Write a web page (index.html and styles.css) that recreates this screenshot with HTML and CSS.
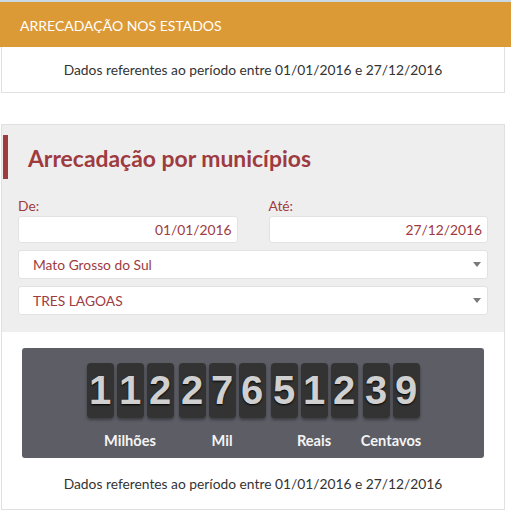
FILE: index.html
```html
<!DOCTYPE html>
<html lang="pt">
<head>
<meta charset="utf-8">
<link rel="stylesheet" href="styles.css">
</head>
<body>
<div class="topline"></div>
<div class="state-heading">ARRECADAÇÃO NOS ESTADOS</div>
<div class="state-box">Dados referentes ao período entre 01/01/2016 e 27/12/2016</div>

<div class="panel">
  <div class="filters">
    <h2 class="title">Arrecadação por municípios</h2>
    <div class="dates">
      <div class="field">
        <div class="label">De:</div>
        <div class="input date">01/01/2016</div>
      </div>
      <div class="field">
        <div class="label">Até:</div>
        <div class="input date">27/12/2016</div>
      </div>
    </div>
    <div class="input select"><span>Mato Grosso do Sul</span><i class="caret"></i></div>
    <div class="input select second"><span>TRES LAGOAS</span><i class="caret"></i></div>
  </div>
  <div class="result">
    <div class="counter">
      <div class="group">
        <div class="digits"><span class="card">1</span><span class="card">1</span><span class="card">2</span></div>
        <div class="unit"><span>Milhões</span></div>
      </div>
      <div class="group">
        <div class="digits"><span class="card">2</span><span class="card">7</span><span class="card">6</span></div>
        <div class="unit"><span>Mil</span></div>
      </div>
      <div class="group">
        <div class="digits"><span class="card">5</span><span class="card">1</span><span class="card">2</span></div>
        <div class="unit"><span>Reais</span></div>
      </div>
      <div class="group">
        <div class="digits"><span class="card">3</span><span class="card">9</span></div>
        <div class="unit"><span>Centavos</span></div>
      </div>
    </div>
    <div class="period">Dados referentes ao período entre 01/01/2016 e 27/12/2016</div>
  </div>
</div>
</body>
</html>
```

FILE: styles.css
```css
* { box-sizing: border-box; }
body {
  margin: 0;
  width: 511px;
  font-family: Lato, "Open Sans", sans-serif;
  font-size: 13.8px;
  color: #333;
  background: #fff;
}
.topline {
  height: 2px;
  background: #c9d9e6;
}
.state-heading {
  background: #dc9a37;
  color: #fff;
  line-height: 20px;
  padding: 14px 20px 11px;
  font-size: 14px;
}
.state-box {
  margin-left: 1px;
  width: 504px;
  border: 1px solid #e0e0e0;
  border-top: none;
  text-align: center;
  line-height: 20px;
  padding: 13px 0 12px;
}
.panel {
  margin-top: 31px;
  margin-left: 1px;
  width: 504px;
  border: 1px solid #e0e0e0;
}
.filters {
  background: #eeeeee;
  padding: 10px 16px 17px;
}
.title {
  margin: 0 0 0 -15px;
  border-left: 5px solid #9e3b40;
  padding: 2px 0 0 20px;
  height: 44px;
  line-height: 42px;
  font-size: 22.9px;
  font-weight: 700;
  color: #9e3b40;
}
.dates {
  display: flex;
  gap: 31px;
  margin-top: 17px;
}
.field { flex: 1; }
.label {
  color: #9e3b40;
  line-height: 20px;
  height: 20px;
}
.input {
  background: #fff;
  border: 1px solid #e2e2e2;
  border-radius: 3px;
  color: #9e3b40;
}
.date {
  height: 27px;
  line-height: 25px;
  text-align: right;
  padding-right: 5px;
}
.select {
  margin-top: 7px;
  height: 29px;
  display: flex;
  align-items: center;
  justify-content: space-between;
  padding: 0 6px 0 14px;
}
.caret {
  width: 0;
  height: 0;
  border-left: 4.5px solid transparent;
  border-right: 4.5px solid transparent;
  border-top: 5px solid #7a7a7a;
}
.result {
  padding: 16px 20px 15px;
}
.counter {
  background: #5c5d65;
  border-radius: 3px;
  height: 110px;
  padding-top: 15px;
  display: flex;
  justify-content: center;
  gap: 5px;
}
.group {
  display: flex;
  flex-direction: column;
  align-items: center;
}
.digits {
  display: flex;
  gap: 3px;
}
.card {
  width: 27px;
  height: 55px;
  background: #333333;
  border-radius: 4px;
  box-shadow: 0 2px 3px rgba(0,0,0,0.35);
  color: #d0d0d0;
  font-family: "Liberation Sans", Arial, sans-serif;
  font-weight: 700;
  font-size: 40px;
  line-height: 55px;
  text-align: center;
  text-shadow: 0 1px 2px #000;
}
.unit {
  width: 0;
  display: flex;
  justify-content: center;
  margin-top: 13px;
  line-height: 20px;
  font-weight: 700;
  font-size: 14.6px;
  color: #f4f4f4;
  white-space: nowrap;
}
.period {
  margin-top: 16px;
  text-align: center;
  line-height: 20px;
}
```
